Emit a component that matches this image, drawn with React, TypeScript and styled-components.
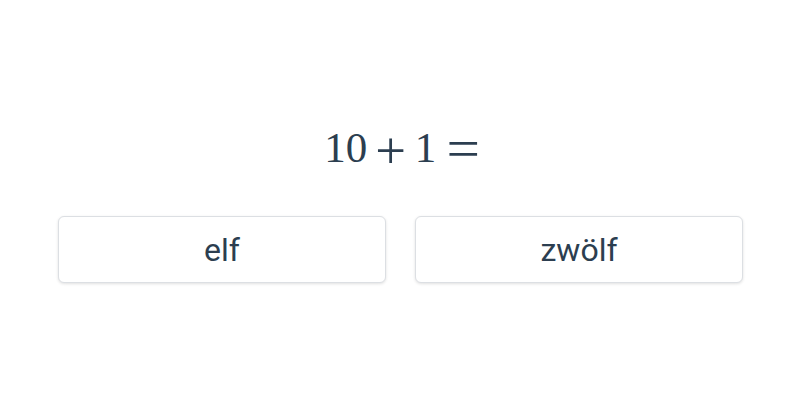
import React from 'react';
import styled, { createGlobalStyle } from 'styled-components';

const GlobalStyle = createGlobalStyle`
    html, body {
        margin: 0;
        padding: 0;
        background: #ffffff;
    }
`;

const Page = styled.div`
    width: 800px;
    height: 400px;
    box-sizing: border-box;
    padding: 122px 57px 0 58px;
    display: flex;
    flex-direction: column;
    align-items: center;
    color: #2c3e50;
`;

const Formula = styled.div`
    display: flex;
    align-items: flex-start;
    height: 52px;
    line-height: 52px;
    font-family: "Liberation Serif", "DejaVu Serif", serif;
    font-size: 43px;
    color: #2c3e50;
    margin-left: 2px;
`;

const Operator = styled.span<{ wide?: boolean }>`
    font-size: ${props => props.wide ? "54px" : "52px"};
    line-height: 52px;
    margin: 0 ${props => props.wide ? "0 0 12px" : "9px"};
    display: inline-block;
    transform: translateY(${props => props.wide ? "1px" : "3px"}) scaleX(${props => props.wide ? 1.1 : 1.05});
`;

const Choices = styled.div`
    margin-top: 42px;
    width: 100%;
    display: grid;
    grid-template-columns: 1fr 1fr;
    gap: 29px;
`;

const Choice = styled.button`
    height: 67px;
    background: #ffffff;
    border: 1px solid #dcdfe3;
    border-radius: 6px;
    box-shadow: 0 1px 3px rgba(0, 0, 0, 0.12);
    font-family: Roboto, "Liberation Sans", sans-serif;
    font-size: 32px;
    color: #2c3e50;
    cursor: pointer;
    padding: 0;
`;

const answers = ["elf", "zwölf"];

const App = () => {
    return (
        <>
            <GlobalStyle />
            <Page>
                <Formula>
                    <span>10</span>
                    <Operator>+</Operator>
                    <span>1</span>
                    <Operator wide>=</Operator>
                </Formula>
                <Choices>
                    {answers.map(a => <Choice key={a}>{a}</Choice>)}
                </Choices>
            </Page>
        </>
    );
};

export default App;
